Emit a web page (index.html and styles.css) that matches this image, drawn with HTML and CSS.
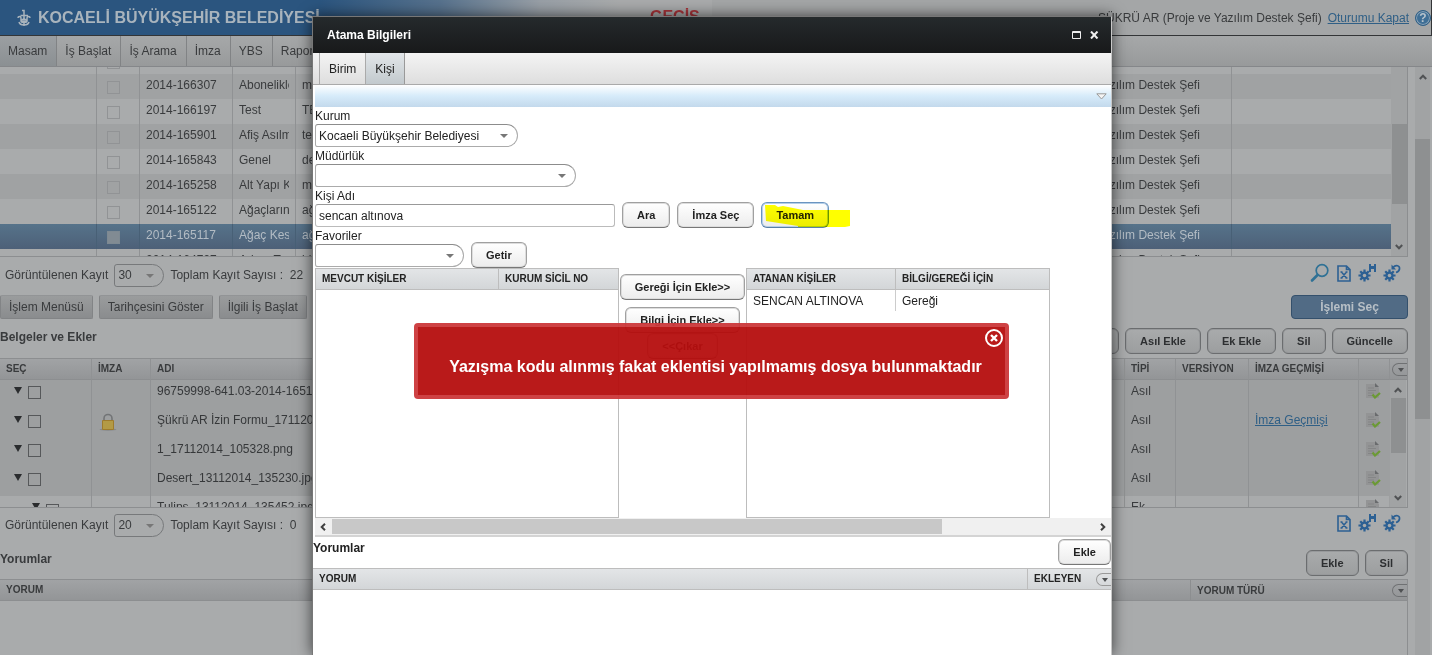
FILE: index.html
```html
<!DOCTYPE html>
<html lang="tr">
<head>
<meta charset="utf-8">
<title>Atama Bilgileri</title>
<link rel="stylesheet" href="styles.css">
</head>
<body>
<svg class="defs" aria-hidden="true">
  <symbol id="i-search" viewBox="0 0 20 20"><circle cx="12" cy="7.500" r="5.800" fill="none" stroke="#2f7195" stroke-width="1.700"/><path d="M7.500 12 2 17.500" stroke="#2f7195" stroke-width="2.600" stroke-linecap="round"/></symbol>
  <symbol id="i-excel" viewBox="0 0 14 17"><path d="M1 1h8.500L13 4.500V16H1zM9.500 1v3.500H13" fill="none" stroke="#2c6093" stroke-width="1.600"/><path d="m4.500 7 5 6M9.500 7l-5 6M3.500 7h2M8.500 7h2M3.500 13h2M8.500 13h2" stroke="#2c6093" stroke-width="1.500"/></symbol>
  <symbol id="i-gear" viewBox="0 0 14 14"><g stroke="#2c6093" stroke-width="2.400"><path d="M7 .5v13M.5 7h13M2.400 2.400l9.200 9.200M11.600 2.400l-9.200 9.200"/></g><circle cx="7" cy="7" r="4.400" fill="#2c6093"/><circle cx="7" cy="7" r="1.900" fill="#a8aaab"/></symbol>
  <symbol id="i-gear-save" viewBox="0 0 18 18"><use href="#i-gear" x="0" y="5" width="13" height="13"/><path d="M11 0h2v2h3V0h2v8h-2V5h-3v3h-2z" fill="#2c6093"/></symbol>
  <symbol id="i-gear-undo" viewBox="0 0 18 18"><use href="#i-gear" x="0" y="5" width="13" height="13"/><path d="M10 3.500c3-3.500 7-1.500 6.500 1.500-.3 2-2 3-3.500 3.500" fill="none" stroke="#2c6093" stroke-width="1.700"/><path d="M8.500.5v5h4.500z" fill="#2c6093"/></symbol>
  <symbol id="i-doc" viewBox="0 0 16 16"><path d="M1 1h9l4 4v10H1z" fill="#939495"/><path d="M10 0v4h4z" fill="#696b6d"/><path d="M3 5h6M3 7.500h8M3 10h6M3 12.500h4" stroke="#848586"/><path d="m7.500 11.500 2.500 3L15 10" fill="none" stroke="#6b9a35" stroke-width="2.200"/></symbol>
  <symbol id="i-lock" viewBox="0 0 18 18"><ellipse cx="9" cy="16.500" rx="8.500" ry="1.200" fill="#858789"/><path d="M5 8V5.500a4 4 0 0 1 8 0V8" fill="none" stroke="#727476" stroke-width="1.600"/><path d="M3.500 7.500h11v9h-11z" fill="#b39a45" stroke="#9e7b2c"/></symbol>
  <symbol id="i-up" viewBox="0 0 8 6"><path d="m.8 5 3.200-3.300L7.200 5" fill="none" stroke="currentColor" stroke-width="2"/></symbol>
</svg>

<div class="page">
  <header class="banner">
    <div class="brand">
      <svg width="14" height="18" viewBox="0 0 14 18" fill="none" stroke="#a9b4bd" stroke-width="1.500"><path d="M5 1.500h2V17M3.500 6.500H11M1 9c0-2 3-2 3 0v3c0 2 6 2 6 0V9c0-2 3-2 3 0M2 13c1 4 9 4 10 0M7 9.500l2.500 2L7 13.500l-2.500-2z"/></svg>
      <h1>KOCAELİ BÜYÜKŞEHİR BELEDİYESİ</h1>
    </div>
    <span class="notice">GEÇİŞ</span>
    <div class="user">
      <span>ŞÜKRÜ AR (Proje ve Yazılım Destek Şefi)</span>
      <a href="#">Oturumu Kapat</a>
      <button class="help" aria-label="Yardım">?</button>
    </div>
  </header>
  <nav class="nav">
    <a href="#" class="on">Masam</a><a href="#">İş Başlat</a><a href="#">İş Arama</a><a href="#">İmza</a><a href="#">YBS</a><a href="#">Rapor</a>
  </nav>

  <div class="content">
    <main class="main">
      <div class="scroller scroller-jobs">
        <table class="grid jobs">
          <colgroup><col class="w-lead"><col class="w-check"><col class="w-no"><col class="w-type"><col><col class="w-person"><col class="w-last"></colgroup>
          <tr><td></td><td><input type="checkbox" aria-label="Seç"></td><td></td><td></td><td></td><td></td><td></td></tr>
          <tr><td></td><td><input type="checkbox" aria-label="Seç"></td><td>2014-166307</td><td><span>Abonelikler</span></td><td>mu</td><td>Yazılım Destek Şefi</td><td></td></tr>
          <tr><td></td><td><input type="checkbox" aria-label="Seç"></td><td>2014-166197</td><td><span>Test</span></td><td>TE</td><td>Yazılım Destek Şefi</td><td></td></tr>
          <tr><td></td><td><input type="checkbox" aria-label="Seç"></td><td>2014-165901</td><td><span>Afiş Asılması</span></td><td>te</td><td>Yazılım Destek Şefi</td><td></td></tr>
          <tr><td></td><td><input type="checkbox" aria-label="Seç"></td><td>2014-165843</td><td><span>Genel</span></td><td>de</td><td>Yazılım Destek Şefi</td><td></td></tr>
          <tr><td></td><td><input type="checkbox" aria-label="Seç"></td><td>2014-165258</td><td><span>Alt Yapı Kazı</span></td><td>mu</td><td>Yazılım Destek Şefi</td><td></td></tr>
          <tr><td></td><td><input type="checkbox" aria-label="Seç"></td><td>2014-165122</td><td><span>Ağaçların</span></td><td>ağ</td><td>Yazılım Destek Şefi</td><td></td></tr>
          <tr class="sel"><td></td><td><input type="checkbox" aria-label="Seç"></td><td>2014-165117</td><td><span>Ağaç Kesimi</span></td><td>ağ</td><td>Yazılım Destek Şefi</td><td></td></tr>
          <tr><td></td><td><input type="checkbox" aria-label="Seç"></td><td>2014-164797</td><td><span>Adres Te</span></td><td>bi</td><td>Yazılım Destek Şefi</td><td></td></tr>
        </table>
        <div class="vbar vbar-jobs"><i class="thumb"></i><svg class="down" width="8" height="6"><use href="#i-up"/></svg></div>
      </div>

      <div class="pager">
        <label for="rows1">Görüntülenen Kayıt</label>
        <span class="combo combo-s"><select id="rows1"><option>30</option></select></span>
        <span>Toplam Kayıt Sayısı : &nbsp;22</span>
        <span class="tools">
          <svg width="20" height="20"><use href="#i-search"/></svg>
          <svg width="14" height="17"><use href="#i-excel"/></svg>
          <svg width="18" height="18"><use href="#i-gear-save"/></svg>
          <svg width="18" height="18"><use href="#i-gear-undo"/></svg>
        </span>
      </div>
      <div class="actions">
        <button class="flat">İşlem Menüsü</button><button class="flat">Tarihçesini Göster</button><button class="flat">İlgili İş Başlat</button>
        <button class="primary">İşlemi Seç</button>
      </div>

      <div class="section">
        <h2>Belgeler ve Ekler</h2>
        <button class="btn">Belge Ekle</button><button class="btn">Asıl Ekle</button><button class="btn">Ek Ekle</button><button class="btn">Sil</button><button class="btn">Güncelle</button>
      </div>
      <div class="docs-box">
        <table class="grid docs">
          <colgroup><col class="w-sec"><col class="w-imza"><col><col class="w-tip"><col class="w-ver"><col class="w-hist"><col class="w-act"></colgroup>
          <thead><tr><th>SEÇ</th><th>İMZA</th><th>ADI</th><th>TİPİ</th><th>VERSİYON</th><th>İMZA GEÇMİŞİ</th><th></th></tr></thead>
          <tbody>
            <tr><td><i class="tri"></i><input type="checkbox" aria-label="Seç"></td><td></td><td>96759998-641.03-2014-165117</td><td>Asıl</td><td></td><td></td><td><svg width="16" height="16"><use href="#i-doc"/></svg></td></tr>
            <tr><td><i class="tri"></i><input type="checkbox" aria-label="Seç"></td><td><svg width="18" height="18"><use href="#i-lock"/></svg></td><td>Şükrü AR İzin Formu_17112014</td><td>Asıl</td><td></td><td><a href="#">İmza Geçmişi</a></td><td><svg width="16" height="16"><use href="#i-doc"/></svg></td></tr>
            <tr><td><i class="tri"></i><input type="checkbox" aria-label="Seç"></td><td></td><td>1_17112014_105328.png</td><td>Asıl</td><td></td><td></td><td><svg width="16" height="16"><use href="#i-doc"/></svg></td></tr>
            <tr><td><i class="tri"></i><input type="checkbox" aria-label="Seç"></td><td></td><td>Desert_13112014_135230.jpg</td><td>Asıl</td><td></td><td></td><td><svg width="16" height="16"><use href="#i-doc"/></svg></td></tr>
            <tr class="child"><td><i class="tri"></i><input type="checkbox" aria-label="Seç"></td><td></td><td>Tulips_13112014_135452.jpg</td><td>Ek</td><td></td><td></td><td><svg width="16" height="16"><use href="#i-doc"/></svg></td></tr>
          </tbody>
        </table>
        <div class="side">
          <div class="head"><button class="menu" aria-label="Sütunlar"></button></div>
          <div class="vbar vbar-docs"><svg class="up" width="8" height="6"><use href="#i-up"/></svg><i class="thumb"></i><svg class="down" width="8" height="6"><use href="#i-up"/></svg></div>
        </div>
      </div>

      <div class="pager pager-low">
        <label for="rows2">Görüntülenen Kayıt</label>
        <span class="combo combo-s"><select id="rows2"><option>20</option></select></span>
        <span>Toplam Kayıt Sayısı : &nbsp;0</span>
        <span class="tools">
          <svg width="14" height="17"><use href="#i-excel"/></svg>
          <svg width="18" height="18"><use href="#i-gear-save"/></svg>
          <svg width="18" height="18"><use href="#i-gear-undo"/></svg>
        </span>
      </div>
      <div class="section">
        <h2>Yorumlar</h2>
        <button class="btn">Ekle</button><button class="btn">Sil</button>
      </div>
      <div class="notes">
        <div class="head"><span>YORUM</span><span class="kind">YORUM TÜRÜ</span><button class="menu" aria-label="Sütunlar"></button></div>
      </div>
    </main>
    <div class="vbar vbar-page"><svg class="up" width="8" height="6"><use href="#i-up"/></svg><i class="thumb"></i></div>
  </div>
</div>

<section class="dialog" role="dialog" aria-labelledby="dlg-title">
  <header class="titlebar">
    <h2 id="dlg-title">Atama Bilgileri</h2>
    <button aria-label="Büyüt"><svg width="9" height="8"><path d="M.5.500h8v7h-8zM0 1.500h9" fill="none" stroke="#eee"/></svg></button>
    <button aria-label="Kapat"><svg width="9" height="8"><path d="m1 .5 6.500 7M7.500.5 1 7.500" stroke="#eee" stroke-width="2"/></svg></button>
  </header>
  <div class="tabs"><button>Birim</button><button class="on">Kişi</button></div>
  <div class="body">
    <div class="bluebar"><svg width="11" height="7" viewBox="0 0 11 7"><path d="M.8.800h9.400L5.500 6z" fill="#f4f4f4" stroke="#999"/></svg></div>
    <form class="form">
      <label for="kurum">Kurum</label>
      <div class="line"><span class="combo combo-m"><select id="kurum"><option>Kocaeli Büyükşehir Belediyesi</option></select></span></div>
      <label for="mudurluk">Müdürlük</label>
      <div class="line"><span class="combo combo-l"><select id="mudurluk"><option></option></select></span></div>
      <label for="kisi">Kişi Adı</label>
      <div class="line"><input id="kisi" type="text" value="sencan altınova"><button type="button" class="btn">Ara</button><button type="button" class="btn">İmza Seç</button><span class="marked"><button type="button" class="btn focus">Tamam</button><svg width="88" height="24" viewBox="0 0 88 24"><path d="M2 1h10l3 2 5-1 20 4h47v16l-5 1H35v-1L3 17z" fill="#ff0"/></svg></span></div>
      <label for="fav">Favoriler</label>
      <div class="line"><span class="combo combo-f"><select id="fav"><option></option></select></span><button type="button" class="btn">Getir</button></div>
    </form>
    <div class="transfer">
      <div class="list"><table class="grid people">
        <colgroup><col class="w-cur"><col></colgroup>
        <thead><tr><th>MEVCUT KİŞİLER</th><th>KURUM SİCİL NO</th></tr></thead></table></div>
      <div class="moves"><button class="btn">Gereği İçin Ekle&gt;&gt;</button><button class="btn">Bilgi İçin Ekle&gt;&gt;</button><button class="btn">&lt;&lt;Çıkar</button></div>
      <div class="list"><table class="grid people">
        <colgroup><col class="w-ass"><col></colgroup>
        <thead><tr><th>ATANAN KİŞİLER</th><th>BİLGİ/GEREĞİ İÇİN</th></tr></thead>
        <tbody><tr><td>SENCAN ALTINOVA</td><td>Gereği</td></tr></tbody></table></div>
    </div>
    <div class="hbar"><svg class="left" width="8" height="6"><use href="#i-up"/></svg><i class="thumb"></i><svg class="right" width="8" height="6"><use href="#i-up"/></svg></div>
  </div>
  <div class="section"><h2>Yorumlar</h2><button class="btn">Ekle</button></div>
  <div class="head"><span>YORUM</span><span class="author">EKLEYEN</span><button class="menu" aria-label="Sütunlar"></button></div>
</section>

<div class="alert" role="alert">
  Yazışma kodu alınmış fakat eklentisi yapılmamış dosya bulunmaktadır
  <button aria-label="Kapat"><svg width="20" height="20" viewBox="0 0 20 20"><circle cx="10" cy="10" r="8" fill="none" stroke="#fff" stroke-width="2"/><path d="m7 7 6 6M13 7l-6 6" stroke="#fff" stroke-width="2.400"/></svg></button>
</div>
</body>
</html>
```
FILE: styles.css
```css
:root {
  --bg: #a9abac;
  --line: #8c8e90;
  --text: #393b3d;
  --link: #2f5f86;
}
* { box-sizing: border-box; }
html, body { height: 100%; }
body {
  margin: 0;
  overflow: hidden;
  background: var(--bg);
  color: var(--text);
  font: 12px/16px "Liberation Sans", Arial, sans-serif;
}
button, input, select { font: inherit; color: inherit; margin: 0; }
button { padding: 0; border: 0; background: none; white-space: nowrap; }
h1, h2 { margin: 0; font-size: 12px; }
a { color: var(--link); }
.defs { position: absolute; width: 0; height: 0; }
.page { height: 100%; display: flex; flex-direction: column; }

/* banner */
.banner {
  position: relative;
  flex: none;
  display: flex;
  align-items: center;
  height: 36px;
  border-bottom: 1px solid #333537;
  border-right: 1px solid #333537;
  background: linear-gradient(90deg, #2b557f 0, #2b557f 320px, #57728d 440px, #989fa6 540px, #a9abac 620px, #a9abac 712px, #a4a6a7 712px);
}
.brand { display: flex; align-items: center; gap: 7px; padding-left: 17px; }
.brand h1 { color: #a9b4bd; font: bold 16px/20px "Liberation Sans Narrow", "Liberation Sans", sans-serif; white-space: nowrap; }
.notice { position: absolute; left: 650px; top: 8px; color: #a8343a; font: bold 16px/18px "Liberation Sans", sans-serif; }
.user { margin-left: auto; display: flex; align-items: center; gap: 6px; white-space: nowrap; }
.help {
  width: 16px; height: 16px; border-radius: 50%;
  background: #3f6f96; border: 1px solid #2f5f86; box-shadow: inset 0 0 0 1px #8aa3b7;
  color: #b8c4cd; font-weight: bold; line-height: 14px;
}

.nav {
  flex: none;
  display: flex;
  height: 31px;
  border-bottom: 1px solid #85878a;
  background: linear-gradient(#a6a8a9, #989a9b);
}
.nav a { padding: 0 9px 0 8px; border-right: 1px solid #818385; line-height: 30px; color: inherit; text-decoration: none; }
.nav .on { background: linear-gradient(#9b9fa2, #8b9093); }

.content { flex: 1; min-height: 0; display: flex; gap: 7px; padding-right: 2px; }
.main { flex: 1; min-width: 0; display: flex; flex-direction: column; }

/* tables */
.grid { width: 100%; table-layout: fixed; border-collapse: separate; border-spacing: 0; }
.grid th, .grid td { padding: 0 0 0 6px; text-align: left; white-space: nowrap; overflow: hidden; border-right: 1px solid #909294; }
.grid th { height: 21px; font-size: 10px; line-height: 20px; border-bottom: 1px solid var(--line); background: linear-gradient(#a1a3a5, #939597); }
.grid td span { display: block; overflow: hidden; margin-right: 6px; }
.scroller { flex: none; display: flex; align-items: flex-start; overflow: hidden; border-bottom: 1px solid var(--line); border-right: 1px solid var(--line); }
.scroller-jobs { height: 190px; }
.jobs { flex: 1; margin-top: -18px; min-width: 0; }
.jobs td { height: 25px; line-height: 21px; padding-bottom: 3px; }
.jobs td:last-child { border-right: 0; }
.jobs tr:nth-child(even) td { background: #a0a2a3; }
.jobs tr.sel td { background: linear-gradient(#56738a, #4d6078); color: #b3bcc4; border-color: #486076; }
.w-lead { width: 97px; } .w-check { width: 43px; } .w-no { width: 93px; } .w-type { width: 63px; }
.w-person { width: 142px; } .w-last { width: 159px; }
.grid input { appearance: none; display: block; width: 13px; height: 13px; border: 1px solid #56585a; }
.jobs input { margin: 4px 0 0 4px; border-color: #919395; }
.jobs .sel input { background: #818b93; border-color: #7d8992; }

.vbar { position: relative; display: flex; flex-direction: column; align-items: center; flex: none; width: 16px; background: #a1a3a4; color: #505254; }
.vbar .thumb { display: block; width: 15px; background: #8e9091; }
.down { transform: rotate(180deg); }
.vbar-jobs { height: 189px; padding-top: 57px; }
.vbar-jobs .thumb { height: 80px; }
.vbar .down { margin: auto 0 6px; }
.vbar-docs { flex: 1; padding-top: 7px; }
.vbar-docs .thumb { height: 55px; margin-top: 5px; }
.vbar-page { width: 15px; padding-top: 7px; }
.vbar-page .thumb { height: 280px; margin-top: 59px; }

.pager { flex: none; display: flex; align-items: center; gap: 6px; height: 38px; padding: 0 7px 2px 5px; }
.pager-low { height: 34px; padding-bottom: 0; }
.tools { margin-left: auto; display: flex; align-items: center; gap: 7px; }
.pager .tools { padding-bottom: 4px; }

/* drop-downs */
.combo { position: relative; display: inline-flex; }
.combo::after { content: ""; position: absolute; right: 10px; top: 10px; border: 4px solid transparent; border-top-color: #777; border-bottom: 0; }
.combo select {
  appearance: none;
  width: 100%; height: 23px; padding: 0 18px 0 3px;
  border: 1px solid #ababab; border-top-color: #8c8c8c; border-radius: 3px 12px 12px 3px;
  background: #fff;
}
.pager .combo select { background: transparent; border-color: #77797b; }
.combo-s { width: 50px; } .combo-m { width: 203px; } .combo-l { width: 261px; } .combo-f { width: 149px; }

.actions { flex: none; display: flex; gap: 6px; height: 24px; }
.flat { padding: 0 8px; border: 1px solid #828486; border-top-color: #929496; border-radius: 2px; background: linear-gradient(#9a9c9d, #8a8c8e); }
.primary { width: 117px; margin-left: auto; border: 1px solid #34506c; border-radius: 4px; background: #516b85; color: #b7bfc6; font-weight: bold; }

.section { flex: none; display: flex; align-items: center; gap: 6px; height: 39px; }
.section h2 { margin-right: auto; margin-top: -4px; }
.section .btn { margin-top: 5px; }
.btn {
  height: 26px; padding: 0 14px;
  border: 1px solid #a0a0a0; border-bottom-color: #777; border-radius: 6px;
  background: linear-gradient(#fff, #ececec);
  box-shadow: inset 0 0 0 1px #ddd;
  color: #222; font-size: 11px; font-weight: bold;
}
.main .btn { background: linear-gradient(#a9abac, #9c9e9f); border-color: #6b6d6f; box-shadow: inset 0 0 0 1px #97999b; color: #2d2f31; }

.docs-box { flex: none; display: flex; align-items: flex-start; height: 150px; overflow: hidden; border: 1px solid var(--line); border-left: 0; }
.docs { flex: 1; min-width: 0; }
.docs td { height: 29px; padding-bottom: 8px; background: #9d9fa0; }
.docs .child td { background: var(--bg); padding-bottom: 9px; }
.docs td:nth-child(3) { color: #36383a; }
.docs svg { display: block; }
.docs td:first-child input { display: inline-block; vertical-align: middle; margin-top: 4px; }
.docs .child td:first-child { padding-left: 24px; }
.docs .child td:first-child input { margin-top: 8px; }
.tri { display: inline-block; margin: 0 6px 0 8px; border: 4px solid transparent; border-top: 7px solid #2a2c2e; border-bottom: 0; }
.w-sec { width: 92px; } .w-imza { width: 59px; } .w-tip { width: 51px; } .w-ver { width: 73px; } .w-hist { width: 110px; } .w-act { width: 31px; }
.docs td:nth-child(2) { padding-bottom: 4px; padding-left: 7px; }
.docs td:last-child { padding: 3px 0 0 6px; border-right-color: #9d9fa0; vertical-align: top; }
.side { align-self: stretch; width: 17px; display: flex; flex-direction: column; }
.side .head { border-top: 0; height: 21px; }

.head { flex: none; display: flex; align-items: center; height: 22px; padding-left: 6px; border: 1px solid var(--line); border-width: 1px 0; background: linear-gradient(#a1a3a5, #939597); font-size: 10px; font-weight: bold; }
.side .head { padding: 0; justify-content: flex-end; }
.menu { position: relative; width: 15px; height: 13px; margin-left: auto; border: 1px solid #6f7173; border-right: 0; border-radius: 7px 0 0 7px; }
.menu::after { content: ""; position: absolute; left: 5px; top: 4px; border: 3px solid transparent; border-top: 4px solid #505254; border-bottom: 0; }
.notes { flex: 1; border-right: 1px solid var(--line); }
.pager-low + .section { height: 37px; }
.kind { align-self: stretch; margin-left: auto; width: 202px; padding-left: 6px; border-left: 1px solid var(--line); line-height: 21px; }
.kind + .menu { margin-left: 0; }

/* assignment dialog */
.dialog {
  position: absolute; left: 312px; top: 16px; bottom: 0; width: 800px;
  display: flex; flex-direction: column;
  background: #fff; border: 1px solid #777; border-width: 1px 1px 0; border-right-color: #c8c8c8;
  box-shadow: 0 0 14px rgba(0, 0, 0, .65);
  color: #222;
}
.titlebar { flex: none; display: flex; align-items: center; gap: 9px; height: 36px; padding: 0 12px 0 14px; background: linear-gradient(#252a2c, #18191a); color: #fff; }
.titlebar h2 { margin-right: auto; }
.titlebar button { display: flex; }
.tabs { flex: none; display: flex; height: 32px; padding-left: 6px; border-bottom: 1px solid #aaa; background: linear-gradient(#f4f4f4, #dedede); }
.tabs button { padding: 0 9px; border-right: 1px solid #aaa; }
.tabs button:first-child { border-left: 1px solid #aaa; }
.tabs .on { background: linear-gradient(#e2e6e9, #c2c9cd); border-right-color: #999; }
.body { flex: none; margin-left: 2px; border-bottom: 2px solid #d4d4d4; }
.bluebar { display: flex; align-items: center; justify-content: flex-end; height: 22px; padding-right: 4px; background: linear-gradient(#fff, #d6ebfa 50%, #c3d9ec); }
.form label { display: block; height: 17px; line-height: 19px; }
.line { display: flex; align-items: flex-start; gap: 7px; height: 23px; }
.line > .btn, .marked { margin-top: -2px; }
.line input { width: 300px; height: 23px; padding: 0 3px; border: 1px solid #bbb; border-top-color: #999; border-radius: 3px; background: #fff; }
.marked { position: relative; }
.marked svg { position: absolute; left: 2px; top: 2px; mix-blend-mode: multiply; pointer-events: none; }
.focus { border-color: #6a94c0; border-bottom-color: #5a7fa6; box-shadow: inset 0 0 0 1px #b5cfe8; }
.transfer { display: flex; height: 250px; margin-top: 1px; }
.list { width: 304px; border: 1px solid #bdbdbd; }
.people th { background: linear-gradient(#e3e5e7, #d3d6d8); border-color: #bdbdbd; color: #222; }
.people td { height: 21px; border-color: #ccc; }
.people th:last-child, .people td:last-child { border-right: 0; }
.w-cur { width: 183px; } .w-ass { width: 149px; }
.moves { width: 127px; padding-top: 6px; display: flex; flex-direction: column; align-items: center; }
.moves .btn:first-child { margin-bottom: 7px; }
.hbar { display: flex; align-items: center; height: 17px; padding: 0 4px; background: #f0f0f0; color: #404040; }
.hbar .thumb { display: block; width: 610px; height: 15px; margin-left: 5px; background: #c8c8c8; }
.left { transform: rotate(-90deg); }
.right { transform: rotate(90deg); margin-left: auto; }
.dialog .section { height: 31px; }
.dialog .section h2 { margin-top: -9px; }
.dialog .section .btn { margin-top: -2px; }
.dialog .head { background: linear-gradient(#e3e5e7, #d3d6d8); border-color: #bdbdbd; line-height: 20px; }
.author { align-self: stretch; margin-left: auto; width: 69px; padding-left: 6px; border-left: 1px solid #bdbdbd; }
.author + .menu { margin-left: 0; border-color: #999; }

.alert {
  position: absolute; left: 414px; top: 323px; width: 595px; height: 76px;
  display: flex; align-items: center; justify-content: center; padding: 11px 0 0 8px;
  border: 4px solid rgba(203, 56, 58, .95); border-radius: 4px;
  background: rgba(181, 14, 14, .95) padding-box;
  color: #fff; font-size: 16px; font-weight: bold; white-space: nowrap;
}
.alert button { position: absolute; right: 1px; top: 1px; display: flex; }
```
